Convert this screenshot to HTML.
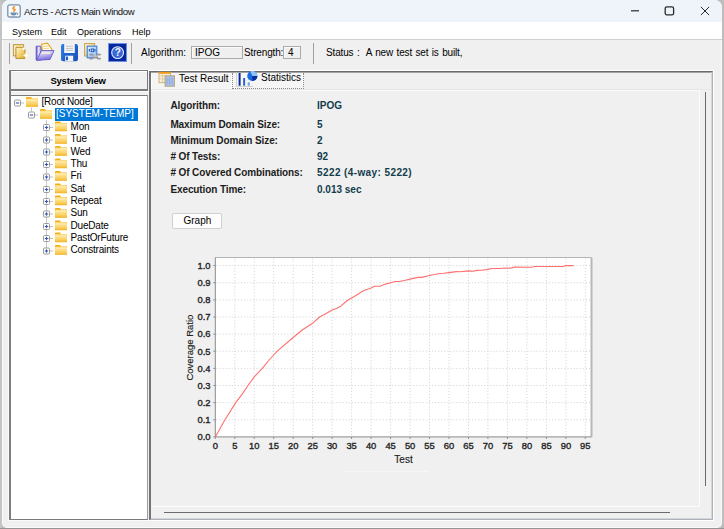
<!DOCTYPE html>
<html><head><meta charset="utf-8">
<style>
*{margin:0;padding:0;box-sizing:border-box}
html,body{width:724px;height:529px;overflow:hidden;background:#bdbdbd;font-family:"Liberation Sans",sans-serif;position:relative}
.a{position:absolute}
.t{position:absolute;white-space:nowrap;color:#000;font-size:10px;line-height:1}
.b{font-weight:700;color:#1c1c1c;letter-spacing:-0.1px}
.v{font-weight:700;color:#123c4c}
</style></head><body>
  <!-- desktop strips -->
  <div class="a" style="left:0;top:0;width:2px;height:529px;background:#c4c4c4"></div>
  <div class="a" style="left:0;top:528px;width:724px;height:1px;background:#959595"></div>
  <div class="a" style="left:2px;top:0;width:720px;height:528px;background:#f0f0f0;border-radius:8px 8px 5px 5px;border-left:1px solid #fbfbfb;border-right:1px solid #fafafa;border-bottom:1px solid #fafafa"></div>
  <!-- title bar -->
  <div class="a" style="left:2px;top:0;width:720px;height:22px;background:#eef4fa;border-radius:7px 7px 0 0"></div>
  <svg class="a" style="left:7px;top:4px" width="14" height="14" viewBox="0 0 14 14">
    <rect x="0.8" y="0.8" width="12.4" height="12.4" rx="2" fill="#fbfbfb" stroke="#7890aa" stroke-width="1.3"/>
    <path d="M7.6 2.2 L5.8 4.4 L8.2 5.6 L6.4 7.8" stroke="#f08a1c" stroke-width="1.5" fill="none" stroke-linejoin="round"/>
    <path d="M3.4 8.6 Q3.6 11.6 6.6 11.6 Q9.6 11.6 9.8 8.6 Z" fill="#6a8eb6"/>
    <path d="M9.6 9 Q11.6 9 10.4 10.8" stroke="#6a8eb6" stroke-width="1" fill="none"/>
    <path d="M3 12.4 H10" stroke="#8aa6c4" stroke-width="0.8"/>
  </svg>
  <div class="t" style="left:24px;top:6.5px;font-size:9.6px;letter-spacing:-0.4px;color:#111">ACTS - ACTS Main Window</div>
  <!-- window controls -->
  <svg class="a" style="left:630px;top:8px" width="10" height="5"><path d="M1 2.8 H9" stroke="#2a2a2a" stroke-width="1.2"/></svg>
  <svg class="a" style="left:664px;top:6px" width="11" height="10"><rect x="1.2" y="0.8" width="8.4" height="8" rx="1.6" fill="none" stroke="#2a2a2a" stroke-width="1.3"/></svg>
  <svg class="a" style="left:700px;top:6px" width="10" height="10" viewBox="0 0 10 10"><path d="M0.9 0.9 L9.1 9.1 M9.1 0.9 L0.9 9.1" stroke="#2a2a2a" stroke-width="1"/></svg>

  <!-- menu -->
  <div class="a" style="left:2px;top:22px;width:720px;height:17px;background:#fff"></div>
  <div class="a" style="left:2px;top:39px;width:720px;height:1px;background:#cfcfcf"></div>
  <div class="t" style="left:12px;top:28px;font-size:9px">System</div>
  <div class="t" style="left:51px;top:28px;font-size:9px">Edit</div>
  <div class="t" style="left:77px;top:28px;font-size:9px">Operations</div>
  <div class="t" style="left:132px;top:28px;font-size:9px">Help</div>

  <!-- toolbar -->
  <div class="a" style="left:9px;top:43px;width:1px;height:21px;background:#a0a0a0"></div>
  <!-- new -->
  <svg class="a" style="left:12px;top:43px" width="20" height="18" viewBox="0 0 20 18">
    <defs>
      <linearGradient id="ng" x1="0" y1="0" x2="1" y2="1"><stop offset="0" stop-color="#fff6d0"/><stop offset="0.5" stop-color="#f3d67a"/><stop offset="1" stop-color="#d9a826"/></linearGradient>
      <radialGradient id="sg"><stop offset="0" stop-color="#ffffff"/><stop offset="0.5" stop-color="#fff8d8"/><stop offset="1" stop-color="#f0d070" stop-opacity="0"/></radialGradient>
    </defs>
    <rect x="1.4" y="1.6" width="10.2" height="11.2" fill="#f6e4a4" stroke="#c29a3c" stroke-width="1"/>
    <path d="M3 3 V12" stroke="#fffbe8" stroke-width="1"/>
    <path d="M3.9 4.3 H10.6 L13 6.8 V15.4 H3.9 Z" fill="url(#ng)" stroke="#b88c2c" stroke-width="1"/>
    <circle cx="11.6" cy="5.8" r="1.2" fill="#fffbe8"/>
    <circle cx="14.2" cy="12.4" r="3" fill="url(#sg)"/>
    <path d="M14.2 8.2 L14.8 11.8 L18.4 12.4 L14.8 13 L14.2 16.6 L13.6 13 L10 12.4 L13.6 11.8 Z" fill="#fffef4"/>
  </svg>
  <!-- open -->
  <svg class="a" style="left:35px;top:42px" width="20" height="20" viewBox="0 0 20 20">
    <defs>
      <linearGradient id="og" x1="0" y1="0" x2="0.3" y2="1"><stop offset="0" stop-color="#f4f2ff"/><stop offset="0.45" stop-color="#c8c2f4"/><stop offset="1" stop-color="#7d72dc"/></linearGradient>
      <linearGradient id="ob" x1="0" y1="0" x2="1" y2="0"><stop offset="0" stop-color="#5a4ec8"/><stop offset="0.5" stop-color="#f0eeff"/><stop offset="1" stop-color="#8a80e0"/></linearGradient>
    </defs>
    <path d="M1.2 4.2 H5.5 L6.2 5.6 V18 H1.2 Z" fill="url(#ob)" stroke="#5a50c4" stroke-width="0.9"/>
    <path d="M6.5 2.2 L12.5 1.2 L17 7.5 L16 9 H7.5 Z" fill="#fffdf2" stroke="#e0a820" stroke-width="1.1"/>
    <path d="M8 4.5 L13 4 M8.5 6.5 L14 6.2" stroke="#f0c860" stroke-width="0.8"/>
    <path d="M6.5 8.6 H19 L15 17.5 L1.5 18.2 Z" fill="url(#og)" stroke="#5e54c8" stroke-width="0.9"/>
    <path d="M6.5 10.2 H15.2 V12 H6.5Z" fill="#f6f4d8" opacity="0.8"/>
  </svg>
  <!-- save -->
  <svg class="a" style="left:60px;top:43px" width="19" height="19" viewBox="0 0 19 19">
    <defs><linearGradient id="fl" x1="0" y1="0" x2="1" y2="1"><stop offset="0" stop-color="#2a78e0"/><stop offset="1" stop-color="#1650b8"/></linearGradient></defs>
    <rect x="1" y="1" width="17" height="17.2" rx="2.2" fill="url(#fl)"/>
    <rect x="4.2" y="1" width="10.6" height="9" fill="#f4f4f4"/>
    <path d="M6 3.2 H13 M6 5.4 H13 M6 7.4 H13" stroke="#b8b8b8" stroke-width="0.8"/>
    <rect x="5.2" y="12.7" width="8" height="5.5" fill="#f2f2f2"/>
    <rect x="6" y="13.6" width="2" height="3.6" fill="#1a5cc8"/>
    <path d="M2 3 V16" stroke="#4a98f0" stroke-width="0.8" opacity="0.7"/>
  </svg>
  <!-- config -->
  <svg class="a" style="left:83px;top:42px" width="20" height="20" viewBox="0 0 20 20">
    <defs>
      <linearGradient id="cg" x1="0" y1="0" x2="1" y2="1"><stop offset="0" stop-color="#fff8e0"/><stop offset="1" stop-color="#e0b850"/></linearGradient>
      <linearGradient id="cb" x1="0" y1="0" x2="1" y2="1"><stop offset="0" stop-color="#e8f2ff"/><stop offset="1" stop-color="#8ab8f0"/></linearGradient>
    </defs>
    <rect x="1.6" y="1.6" width="10" height="12.4" fill="url(#cg)" stroke="#c8a048" stroke-width="1"/>
    <rect x="4.2" y="4.2" width="9.6" height="11.6" fill="url(#cb)" stroke="#3a7ee0" stroke-width="1.1"/>
    <path d="M6.4 7 V9.6 M12 7 V9.6" stroke="#2060c0" stroke-width="1.1"/>
    <rect x="8.2" y="7" width="2.4" height="2.6" fill="none" stroke="#2060c0" stroke-width="1"/>
    <path d="M9.6 14.6 H14.6" stroke="#a0a0a0" stroke-width="2.2"/>
    <path d="M6.6 13.1 A2.2 2.2 0 1 1 6.6 16.1" fill="none" stroke="#969696" stroke-width="1.6"/>
    <path d="M17.6 13.1 A2.2 2.2 0 1 0 17.6 16.1" fill="none" stroke="#969696" stroke-width="1.6"/>
    <path d="M9.6 14.1 H14.6" stroke="#eeeeee" stroke-width="0.7"/>
  </svg>
  <!-- help -->
  <svg class="a" style="left:108px;top:43px" width="19" height="19" viewBox="0 0 19 19">
    <rect x="0.5" y="0.5" width="18" height="18" fill="#0a2898" stroke="#6a90e8" stroke-width="1"/>
    <rect x="2" y="2" width="15" height="15" rx="2" fill="#0626a0"/>
    <circle cx="9.6" cy="9.6" r="5.9" fill="#3868d4" stroke="#e6eeff" stroke-width="1.1"/>
    <text x="9.7" y="13.3" font-size="10" font-family="Liberation Sans" font-weight="700" fill="#f4f8ff" text-anchor="middle">?</text>
  </svg>
  <div class="a" style="left:131px;top:43px;width:1px;height:21px;background:#a0a0a0"></div>
  <div class="t" style="left:141px;top:48px">Algorithm:</div>
  <div class="a" style="left:191px;top:46px;width:52px;height:13px;border:1px solid #ababab;background:#efefef;box-shadow:inset 1px 1px 0 #fafafa"></div>
  <div class="t" style="left:195px;top:48px">IPOG</div>
  <div class="t" style="left:244px;top:48px;letter-spacing:-0.15px">Strength:</div>
  <div class="a" style="left:283px;top:46px;width:18px;height:13px;border:1px solid #ababab;background:#f0f0f0;box-shadow:inset 1px 1px 0 #fafafa"></div>
  <div class="t" style="left:288px;top:48px">4</div>
  <div class="a" style="left:313px;top:43px;width:1px;height:21px;background:#a0a0a0"></div>
  <div class="t" style="left:326px;top:48px;letter-spacing:-0.15px;word-spacing:0.8px">Status :&nbsp; A new test set is built,</div>

  <!-- left panel -->
  <div class="a" style="left:8px;top:69px;width:141px;height:452px;border:1px solid #fafafa;border-right:none"></div>
  <div class="a" style="left:9px;top:70px;width:139px;height:21px;border:1px solid #7a7a7a;border-bottom:2px solid #7a7a7a;box-shadow:inset 1px 1px 0 #fff"></div>
  <div class="a" style="left:9px;top:91px;width:139px;height:1px;background:#fcfcfc"></div>
  <div class="t" style="left:50.5px;top:75.8px;font-size:9.5px;font-weight:700;letter-spacing:-0.25px">System View</div>
  <div class="a" style="left:9px;top:95px;width:139px;height:425px;border:1px solid #7a7a7a;border-right-color:#9c9c9c;border-left:2px solid #7e7e7e;background:#fff"></div>
  <div class="a" style="left:9px;top:70px;width:2px;height:26px;background:#7e7e7e"></div>
  <svg class="a" style="left:0;top:0" width="150" height="529"><defs><linearGradient id="fg" x1="0" y1="0" x2="0" y2="1"><stop offset="0" stop-color="#ffe7a0"/><stop offset="0.6" stop-color="#fcd770"/><stop offset="1" stop-color="#f5bd3c"/></linearGradient></defs><path d="M31.5 107.5 V111.5" stroke="#c8c8c8" stroke-width="1"/><path d="M46.5 120 V250.6" stroke="#c8c8c8" stroke-width="1"/><rect x="14.5" y="100.0" width="6" height="6" rx="1" fill="#fff" stroke="#9a9a9a" stroke-width="1"/><path d="M15.8 103.0 h3.4" stroke="#3a58b0" stroke-width="1.1"/><path d="M21.0 103.0 h3" stroke="#c0c0c0" stroke-width="1"/><path d="M26.0 98.0 q0 -1 1 -1 h4 l1 1.5 h6 v8.2 h-12Z" fill="#f2ae14"/><rect x="26.0" y="98.7" width="12" height="7.5" rx="0.8" fill="url(#fg)"/><path d="M27.0 100.7 h10" stroke="#fff2c8" stroke-width="0.7"/><rect x="28.5" y="112.0" width="6" height="6" rx="1" fill="#fff" stroke="#9a9a9a" stroke-width="1"/><path d="M29.8 115.0 h3.4" stroke="#3a58b0" stroke-width="1.1"/><path d="M35.0 115.0 h3" stroke="#c0c0c0" stroke-width="1"/><path d="M40.0 110.0 q0 -1 1 -1 h4 l1 1.5 h6 v8.2 h-12Z" fill="#f2ae14"/><rect x="40.0" y="110.7" width="12" height="7.5" rx="0.8" fill="url(#fg)"/><path d="M41.0 112.7 h10" stroke="#fff2c8" stroke-width="0.7"/><rect x="43.5" y="124.5" width="6" height="6" rx="1" fill="#fff" stroke="#9a9a9a" stroke-width="1"/><path d="M44.8 127.5 h3.4" stroke="#3a58b0" stroke-width="1.1"/><path d="M46.5 125.8 v3.4" stroke="#3a58b0" stroke-width="1.1"/><path d="M50.0 127.5 h3" stroke="#c0c0c0" stroke-width="1"/><path d="M55.0 122.5 q0 -1 1 -1 h4 l1 1.5 h6 v8.2 h-12Z" fill="#f2ae14"/><rect x="55.0" y="123.2" width="12" height="7.5" rx="0.8" fill="url(#fg)"/><path d="M56.0 125.2 h10" stroke="#fff2c8" stroke-width="0.7"/><rect x="43.5" y="137.0" width="6" height="6" rx="1" fill="#fff" stroke="#9a9a9a" stroke-width="1"/><path d="M44.8 140.0 h3.4" stroke="#3a58b0" stroke-width="1.1"/><path d="M46.5 138.3 v3.4" stroke="#3a58b0" stroke-width="1.1"/><path d="M50.0 140.0 h3" stroke="#c0c0c0" stroke-width="1"/><path d="M55.0 135.0 q0 -1 1 -1 h4 l1 1.5 h6 v8.2 h-12Z" fill="#f2ae14"/><rect x="55.0" y="135.7" width="12" height="7.5" rx="0.8" fill="url(#fg)"/><path d="M56.0 137.7 h10" stroke="#fff2c8" stroke-width="0.7"/><rect x="43.5" y="149.0" width="6" height="6" rx="1" fill="#fff" stroke="#9a9a9a" stroke-width="1"/><path d="M44.8 152.0 h3.4" stroke="#3a58b0" stroke-width="1.1"/><path d="M46.5 150.3 v3.4" stroke="#3a58b0" stroke-width="1.1"/><path d="M50.0 152.0 h3" stroke="#c0c0c0" stroke-width="1"/><path d="M55.0 147.0 q0 -1 1 -1 h4 l1 1.5 h6 v8.2 h-12Z" fill="#f2ae14"/><rect x="55.0" y="147.7" width="12" height="7.5" rx="0.8" fill="url(#fg)"/><path d="M56.0 149.7 h10" stroke="#fff2c8" stroke-width="0.7"/><rect x="43.5" y="161.5" width="6" height="6" rx="1" fill="#fff" stroke="#9a9a9a" stroke-width="1"/><path d="M44.8 164.5 h3.4" stroke="#3a58b0" stroke-width="1.1"/><path d="M46.5 162.8 v3.4" stroke="#3a58b0" stroke-width="1.1"/><path d="M50.0 164.5 h3" stroke="#c0c0c0" stroke-width="1"/><path d="M55.0 159.5 q0 -1 1 -1 h4 l1 1.5 h6 v8.2 h-12Z" fill="#f2ae14"/><rect x="55.0" y="160.2" width="12" height="7.5" rx="0.8" fill="url(#fg)"/><path d="M56.0 162.2 h10" stroke="#fff2c8" stroke-width="0.7"/><rect x="43.5" y="174.0" width="6" height="6" rx="1" fill="#fff" stroke="#9a9a9a" stroke-width="1"/><path d="M44.8 177.0 h3.4" stroke="#3a58b0" stroke-width="1.1"/><path d="M46.5 175.3 v3.4" stroke="#3a58b0" stroke-width="1.1"/><path d="M50.0 177.0 h3" stroke="#c0c0c0" stroke-width="1"/><path d="M55.0 172.0 q0 -1 1 -1 h4 l1 1.5 h6 v8.2 h-12Z" fill="#f2ae14"/><rect x="55.0" y="172.7" width="12" height="7.5" rx="0.8" fill="url(#fg)"/><path d="M56.0 174.7 h10" stroke="#fff2c8" stroke-width="0.7"/><rect x="43.5" y="186.5" width="6" height="6" rx="1" fill="#fff" stroke="#9a9a9a" stroke-width="1"/><path d="M44.8 189.5 h3.4" stroke="#3a58b0" stroke-width="1.1"/><path d="M46.5 187.8 v3.4" stroke="#3a58b0" stroke-width="1.1"/><path d="M50.0 189.5 h3" stroke="#c0c0c0" stroke-width="1"/><path d="M55.0 184.5 q0 -1 1 -1 h4 l1 1.5 h6 v8.2 h-12Z" fill="#f2ae14"/><rect x="55.0" y="185.2" width="12" height="7.5" rx="0.8" fill="url(#fg)"/><path d="M56.0 187.2 h10" stroke="#fff2c8" stroke-width="0.7"/><rect x="43.5" y="198.5" width="6" height="6" rx="1" fill="#fff" stroke="#9a9a9a" stroke-width="1"/><path d="M44.8 201.5 h3.4" stroke="#3a58b0" stroke-width="1.1"/><path d="M46.5 199.8 v3.4" stroke="#3a58b0" stroke-width="1.1"/><path d="M50.0 201.5 h3" stroke="#c0c0c0" stroke-width="1"/><path d="M55.0 196.5 q0 -1 1 -1 h4 l1 1.5 h6 v8.2 h-12Z" fill="#f2ae14"/><rect x="55.0" y="197.2" width="12" height="7.5" rx="0.8" fill="url(#fg)"/><path d="M56.0 199.2 h10" stroke="#fff2c8" stroke-width="0.7"/><rect x="43.5" y="211.0" width="6" height="6" rx="1" fill="#fff" stroke="#9a9a9a" stroke-width="1"/><path d="M44.8 214.0 h3.4" stroke="#3a58b0" stroke-width="1.1"/><path d="M46.5 212.3 v3.4" stroke="#3a58b0" stroke-width="1.1"/><path d="M50.0 214.0 h3" stroke="#c0c0c0" stroke-width="1"/><path d="M55.0 209.0 q0 -1 1 -1 h4 l1 1.5 h6 v8.2 h-12Z" fill="#f2ae14"/><rect x="55.0" y="209.7" width="12" height="7.5" rx="0.8" fill="url(#fg)"/><path d="M56.0 211.7 h10" stroke="#fff2c8" stroke-width="0.7"/><rect x="43.5" y="223.5" width="6" height="6" rx="1" fill="#fff" stroke="#9a9a9a" stroke-width="1"/><path d="M44.8 226.5 h3.4" stroke="#3a58b0" stroke-width="1.1"/><path d="M46.5 224.8 v3.4" stroke="#3a58b0" stroke-width="1.1"/><path d="M50.0 226.5 h3" stroke="#c0c0c0" stroke-width="1"/><path d="M55.0 221.5 q0 -1 1 -1 h4 l1 1.5 h6 v8.2 h-12Z" fill="#f2ae14"/><rect x="55.0" y="222.2" width="12" height="7.5" rx="0.8" fill="url(#fg)"/><path d="M56.0 224.2 h10" stroke="#fff2c8" stroke-width="0.7"/><rect x="43.5" y="235.5" width="6" height="6" rx="1" fill="#fff" stroke="#9a9a9a" stroke-width="1"/><path d="M44.8 238.5 h3.4" stroke="#3a58b0" stroke-width="1.1"/><path d="M46.5 236.8 v3.4" stroke="#3a58b0" stroke-width="1.1"/><path d="M50.0 238.5 h3" stroke="#c0c0c0" stroke-width="1"/><path d="M55.0 233.5 q0 -1 1 -1 h4 l1 1.5 h6 v8.2 h-12Z" fill="#f2ae14"/><rect x="55.0" y="234.2" width="12" height="7.5" rx="0.8" fill="url(#fg)"/><path d="M56.0 236.2 h10" stroke="#fff2c8" stroke-width="0.7"/><rect x="43.5" y="248.0" width="6" height="6" rx="1" fill="#fff" stroke="#9a9a9a" stroke-width="1"/><path d="M44.8 251.0 h3.4" stroke="#3a58b0" stroke-width="1.1"/><path d="M46.5 249.3 v3.4" stroke="#3a58b0" stroke-width="1.1"/><path d="M50.0 251.0 h3" stroke="#c0c0c0" stroke-width="1"/><path d="M55.0 246.0 q0 -1 1 -1 h4 l1 1.5 h6 v8.2 h-12Z" fill="#f2ae14"/><rect x="55.0" y="246.7" width="12" height="7.5" rx="0.8" fill="url(#fg)"/><path d="M56.0 248.7 h10" stroke="#fff2c8" stroke-width="0.7"/></svg><div class="t" style="left:41.5px;top:97.1px;letter-spacing:-0.2px">[Root Node]</div><div class="a" style="left:55px;top:108px;width:83px;height:12.7px;background:#0078d7"></div><div class="t" style="left:56.0px;top:109.4px;color:#fff">[SYSTEM-TEMP]</div><div class="t" style="left:70.5px;top:121.8px;letter-spacing:-0.2px">Mon</div><div class="t" style="left:70.5px;top:134.2px;letter-spacing:-0.2px">Tue</div><div class="t" style="left:70.5px;top:146.5px;letter-spacing:-0.2px">Wed</div><div class="t" style="left:70.5px;top:158.9px;letter-spacing:-0.2px">Thu</div><div class="t" style="left:70.5px;top:171.2px;letter-spacing:-0.2px">Fri</div><div class="t" style="left:70.5px;top:183.6px;letter-spacing:-0.2px">Sat</div><div class="t" style="left:70.5px;top:196.0px;letter-spacing:-0.2px">Repeat</div><div class="t" style="left:70.5px;top:208.3px;letter-spacing:-0.2px">Sun</div><div class="t" style="left:70.5px;top:220.7px;letter-spacing:-0.2px">DueDate</div><div class="t" style="left:70.5px;top:233.0px;letter-spacing:-0.2px">PastOrFuture</div><div class="t" style="left:70.5px;top:245.4px;letter-spacing:-0.2px">Constraints</div>

  <!-- right panel -->
  <div class="a" style="left:149px;top:70px;width:565px;height:451px;border:1px solid #fff"></div>
  <div class="a" style="left:149px;top:71px;width:564px;height:449px;border:1px solid #6a6a6a;border-left:2px solid #747474;border-right-color:#adb1b9;border-bottom-color:#adb1b9"></div>
  <div class="a" style="left:151px;top:72px;width:561px;height:447px;border:1px solid #a4a4a4;border-left:none;border-right-color:#d4d6da;border-bottom-color:#d4d6da"></div>
  <div class="a" style="left:152px;top:89px;width:560px;height:1px;background:#e6e6e6"></div>
  <div class="a" style="left:152px;top:90px;width:548px;height:417px;border-top:1px solid #fafafa;border-right:1px solid #fcfcfc;border-bottom:1px solid #fcfcfc"></div>
  <div class="a" style="left:343px;top:471px;width:86px;height:1px;background:#f6f6f6"></div>
  <div class="a" style="left:705px;top:92px;width:1px;height:394px;background:#6a6a6a"></div>
  <div class="a" style="left:164px;top:512px;width:506px;height:1px;background:#6a6a6a"></div>

  <!-- tabs -->
  <div class="a" style="left:151px;top:73px;width:81px;height:16px;background:#f5f5f5;border-left:1px solid #fff;border-right:1px solid #fff"></div>
  <svg class="a" style="left:158px;top:71px" width="18" height="16" viewBox="0 0 18 16">
    <rect x="1" y="1.2" width="11.5" height="10.5" fill="#f6efd8" stroke="#c9ad6a" stroke-width="0.9"/>
    <rect x="1" y="1" width="11.5" height="1.8" fill="#f29a1a"/>
    <path d="M1.5 5 H12 M1.5 8 H12 M4.5 3 V11.5" stroke="#d9c58e" stroke-width="0.7"/>
    <rect x="7" y="4.8" width="9.5" height="10.5" fill="#a9bfe6" stroke="#b7a57a" stroke-width="0.9"/>
    <path d="M9 7 V13.5 M11.5 7 V13.5 M14 7 V13.5" stroke="#8ea6d6" stroke-width="0.8"/>
  </svg>
  <div class="t" style="left:179px;top:74px">Test Result</div>
  <div class="a" style="left:232px;top:73px;width:72px;height:16px;background:#f6f6f6;border:1px dotted #8a8a8a;border-top:none"></div>
  <svg class="a" style="left:236px;top:71px" width="22" height="17" viewBox="0 0 22 17">
    <path d="M0.5 1 V15.5 H17" stroke="#c8c8c8" stroke-width="0.8" fill="none"/>
    <rect x="2.6" y="2" width="2" height="12.7" fill="#0b2c9c"/>
    <rect x="7.2" y="7" width="1.9" height="7.7" fill="#1f62d6"/>
    <rect x="11.7" y="11.3" width="2.1" height="3.4" fill="#72a2e2"/>
    <circle cx="16.3" cy="5" r="5.1" fill="#1c6ae2"/>
    <path d="M16.3 5 L14.3 0.4 A5.1 5.1 0 0 1 21.4 5 Z" fill="#8ec2f2"/>
    <path d="M16.3 5 H21.4 A5.1 5.1 0 0 1 16.3 10.1 Z" fill="#0b2c9c"/>
  </svg>
  <div class="t" style="left:261px;top:72.8px">Statistics</div>

  <!-- stats -->
  <div class="t b" style="left:170.4px;top:101.2px">Algorithm:</div>
  <div class="t v" style="left:317px;top:101.2px">IPOG</div>
  <div class="t b" style="left:170.4px;top:119.8px">Maximum Domain Size:</div>
  <div class="t v" style="left:317px;top:119.8px">5</div>
  <div class="t b" style="left:170.4px;top:136.2px">Minimum Domain Size:</div>
  <div class="t v" style="left:317px;top:136.2px">2</div>
  <div class="t b" style="left:170.4px;top:152.3px">&#35; Of Tests:</div>
  <div class="t v" style="left:317px;top:152.3px">92</div>
  <div class="t b" style="left:170.4px;top:168.4px">&#35; Of Covered Combinations:</div>
  <div class="t v" style="left:317px;top:168.4px;letter-spacing:0.4px">5222 (4-way: 5222)</div>
  <div class="t b" style="left:170.4px;top:184.8px">Execution Time:</div>
  <div class="t v" style="left:317px;top:184.8px">0.013 sec</div>

  <!-- graph button -->
  <div class="a" style="left:172px;top:213px;width:50px;height:16px;background:#fdfdfd;border:1px solid #d0d0d0;border-radius:2px"></div>
  <div class="t" style="left:183.5px;top:216px">Graph</div>

  <svg class="a" style="left:0;top:0" width="724" height="529" viewBox="0 0 724 529">
<rect x="215.3" y="257.5" width="376.2" height="179.39999999999998" fill="#fff"/>
<g stroke="#d4d4d4" stroke-width="1" stroke-dasharray="1.1 1.98" fill="none"><path d="M234.8 258.5 V436.9" /><path d="M254.2 258.5 V436.9" /><path d="M273.7 258.5 V436.9" /><path d="M293.2 258.5 V436.9" /><path d="M312.7 258.5 V436.9" /><path d="M332.1 258.5 V436.9" /><path d="M351.6 258.5 V436.9" /><path d="M371.1 258.5 V436.9" /><path d="M390.6 258.5 V436.9" /><path d="M410.1 258.5 V436.9" /><path d="M429.5 258.5 V436.9" /><path d="M449.0 258.5 V436.9" /><path d="M468.5 258.5 V436.9" /><path d="M487.9 258.5 V436.9" /><path d="M507.4 258.5 V436.9" /><path d="M526.9 258.5 V436.9" /><path d="M546.4 258.5 V436.9" /><path d="M565.9 258.5 V436.9" /><path d="M585.3 258.5 V436.9" /><path d="M216.3 419.8 H591.5" /><path d="M216.3 402.6 H591.5" /><path d="M216.3 385.5 H591.5" /><path d="M216.3 368.4 H591.5" /><path d="M216.3 351.2 H591.5" /><path d="M216.3 334.1 H591.5" /><path d="M216.3 317.0 H591.5" /><path d="M216.3 299.9 H591.5" /><path d="M216.3 282.7 H591.5" /><path d="M216.3 265.6 H591.5" /></g>
<path d="M215.3 257.5 H591.5" stroke="#b4b4b4" stroke-width="1"/>
<path d="M591.5 257.5 V436.9" stroke="#b8b8b8" stroke-width="2"/>
<g stroke="#8c8c8c" stroke-width="1" fill="none"><path d="M215.3 436.9 v2" /><path d="M234.8 436.9 v2" /><path d="M254.2 436.9 v2" /><path d="M273.7 436.9 v2" /><path d="M293.2 436.9 v2" /><path d="M312.7 436.9 v2" /><path d="M332.1 436.9 v2" /><path d="M351.6 436.9 v2" /><path d="M371.1 436.9 v2" /><path d="M390.6 436.9 v2" /><path d="M410.1 436.9 v2" /><path d="M429.5 436.9 v2" /><path d="M449.0 436.9 v2" /><path d="M468.5 436.9 v2" /><path d="M487.9 436.9 v2" /><path d="M507.4 436.9 v2" /><path d="M526.9 436.9 v2" /><path d="M546.4 436.9 v2" /><path d="M565.9 436.9 v2" /><path d="M585.3 436.9 v2" /><path d="M213.3 436.9 h2" /><path d="M213.3 419.8 h2" /><path d="M213.3 402.6 h2" /><path d="M213.3 385.5 h2" /><path d="M213.3 368.4 h2" /><path d="M213.3 351.2 h2" /><path d="M213.3 334.1 h2" /><path d="M213.3 317.0 h2" /><path d="M213.3 299.9 h2" /><path d="M213.3 282.7 h2" /><path d="M213.3 265.6 h2" /></g>
<path d="M215.3 257.5 V436.9 H591.5" stroke="#8a8a8a" stroke-width="1" fill="none"/>
<path d="M215.3 436.9 L225.0 419.8 L235.7 402.6 L242.2 394.1 L248.0 385.5 L254.2 376.9 L262.3 368.4 L269.1 360.0 L273.7 355.0 L277.2 351.2 L293.2 337.5 L302.2 330.0 L309.9 325.0 L312.7 323.2 L319.5 317.0 L324.4 314.4 L332.1 310.0 L336.4 308.6 L340.7 306.2 L347.3 300.5 L351.6 298.0 L355.5 295.7 L363.3 290.8 L371.1 287.9 L374.6 286.2 L380.1 286.2 L385.5 284.1 L390.6 282.7 L394.9 281.5 L399.5 281.5 L405.4 280.3 L410.1 279.1 L417.8 277.4 L421.7 277.4 L429.5 275.5 L438.1 273.7 L443.9 273.3 L449.0 272.6 L456.4 271.6 L459.9 271.8 L468.5 270.9 L473.5 271.3 L476.7 270.4 L481.7 270.2 L487.9 269.4 L491.8 268.5 L500.4 268.5 L503.9 268.0 L510.2 268.2 L514.4 267.1 L531.6 267.2 L534.7 266.5 L563.5 266.5 L565.9 265.6 L573.6 265.6" stroke="#ff7070" stroke-width="1.1" fill="none" stroke-linejoin="round"/>
<g font-family="Liberation Sans" font-size="9.4" font-weight="400" fill="#222" stroke="#222" stroke-width="0.35"><text x="215.3" y="449.3" text-anchor="middle">0</text><text x="234.8" y="449.3" text-anchor="middle">5</text><text x="254.2" y="449.3" text-anchor="middle">10</text><text x="273.7" y="449.3" text-anchor="middle">15</text><text x="293.2" y="449.3" text-anchor="middle">20</text><text x="312.7" y="449.3" text-anchor="middle">25</text><text x="332.1" y="449.3" text-anchor="middle">30</text><text x="351.6" y="449.3" text-anchor="middle">35</text><text x="371.1" y="449.3" text-anchor="middle">40</text><text x="390.6" y="449.3" text-anchor="middle">45</text><text x="410.1" y="449.3" text-anchor="middle">50</text><text x="429.5" y="449.3" text-anchor="middle">55</text><text x="449.0" y="449.3" text-anchor="middle">60</text><text x="468.5" y="449.3" text-anchor="middle">65</text><text x="487.9" y="449.3" text-anchor="middle">70</text><text x="507.4" y="449.3" text-anchor="middle">75</text><text x="526.9" y="449.3" text-anchor="middle">80</text><text x="546.4" y="449.3" text-anchor="middle">85</text><text x="565.9" y="449.3" text-anchor="middle">90</text><text x="585.3" y="449.3" text-anchor="middle">95</text><text x="210.5" y="440.2" text-anchor="end">0.0</text><text x="210.5" y="423.1" text-anchor="end">0.1</text><text x="210.5" y="405.9" text-anchor="end">0.2</text><text x="210.5" y="388.8" text-anchor="end">0.3</text><text x="210.5" y="371.7" text-anchor="end">0.4</text><text x="210.5" y="354.6" text-anchor="end">0.5</text><text x="210.5" y="337.4" text-anchor="end">0.6</text><text x="210.5" y="320.3" text-anchor="end">0.7</text><text x="210.5" y="303.2" text-anchor="end">0.8</text><text x="210.5" y="286.0" text-anchor="end">0.9</text><text x="210.5" y="268.9" text-anchor="end">1.0</text></g>
<text x="403.5" y="462.5" font-family="Liberation Sans" font-size="10" fill="#222" stroke="#222" stroke-width="0.15" text-anchor="middle">Test</text>
<text transform="translate(193.3 347.6) rotate(-90)" font-family="Liberation Sans" font-size="9.5" fill="#222" stroke="#222" stroke-width="0.15" text-anchor="middle">Coverage Ratio</text>
</svg>
</body></html>
